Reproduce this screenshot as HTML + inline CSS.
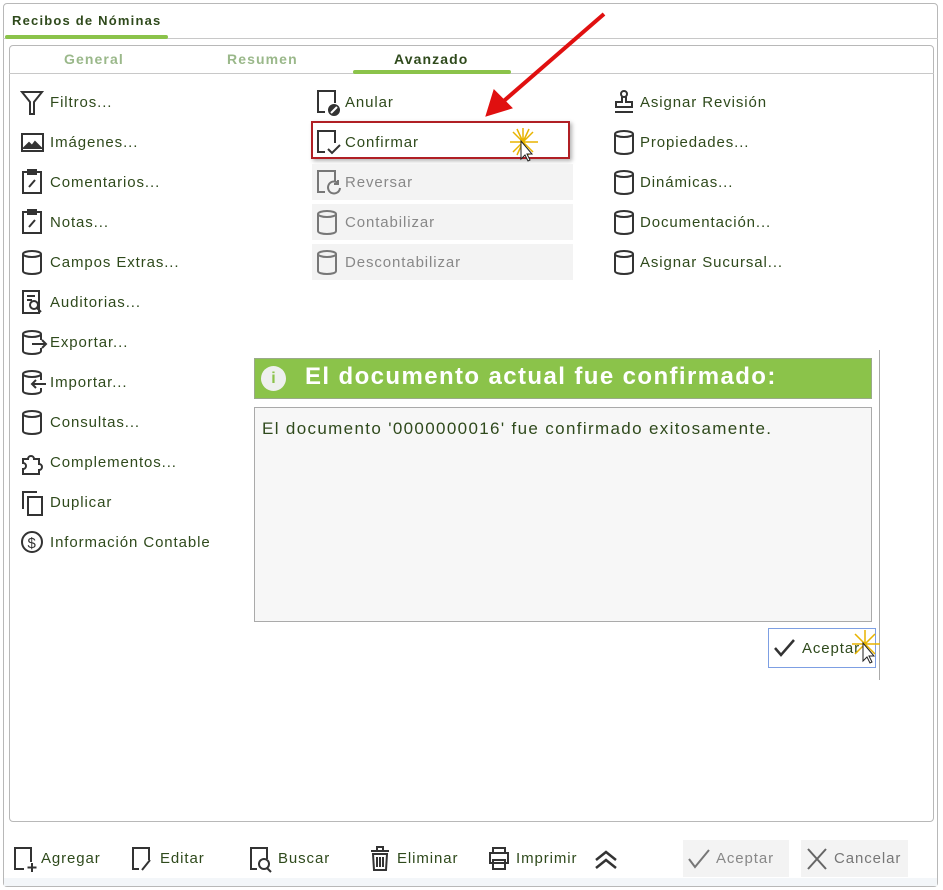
<!DOCTYPE html>
<html><head><meta charset="utf-8"><style>
*{box-sizing:border-box;margin:0;padding:0}
body{width:943px;height:890px;background:#fff;font-family:"Liberation Sans",sans-serif;color:#2f4a1c;position:relative;overflow:hidden}
.a{position:absolute}
.t{font-size:15px;white-space:nowrap;letter-spacing:0.9px}
svg{position:absolute;fill:none;stroke:#333;stroke-width:2}
.gray{color:#888}
.gb{background:#f3f3f3}
</style></head><body>
<div class="a" style="left:3px;top:3px;width:935px;height:884px;border:1px solid #b8b8b8;border-radius:4px;background:#fff"></div>
<div class="a" style="left:3px;top:38px;width:935px;border-top:1px solid #c8c8c8"></div>
<div class="a" style="left:12px;top:13px;font-size:13px;font-weight:bold;color:#2f4a1c;letter-spacing:1.2px">Recibos de Nóminas</div>
<div class="a" style="left:5px;top:35px;width:163px;height:4px;background:#8bc34a;border-radius:2px"></div>
<div class="a" style="left:9px;top:45px;width:925px;height:777px;border:1px solid #b8b8b8;border-radius:4px"></div>
<div class="a" style="left:9px;top:73px;width:925px;border-top:1px solid #c8c8c8"></div>
<div class="a" style="left:64px;top:51px;font-size:14px;letter-spacing:1.1px;font-weight:bold;color:#9ab88a">General</div>
<div class="a" style="left:227px;top:51px;font-size:14px;letter-spacing:1.1px;font-weight:bold;color:#9ab88a">Resumen</div>
<div class="a" style="left:394px;top:51px;font-size:14px;letter-spacing:1.1px;font-weight:bold;color:#2f4a1c">Avanzado</div>
<div class="a" style="left:353px;top:70px;width:158px;height:4px;background:#8bc34a;border-radius:2px"></div>

<!-- col1 -->
<svg style="left:20px;top:90px" width="26" height="26"><path d="M2 2h20l-8 10v12h-4V12z"/></svg><div class="a t" style="left:50px;top:94px">Filtros...</div>
<svg style="left:20px;top:130px" width="26" height="26"><rect x="2" y="4" width="21" height="17"/><path d="M4 18l5-5 3 3 3-4 6 6z" fill="#333"/></svg><div class="a t" style="left:50px;top:134px">Imágenes...</div>
<svg style="left:20px;top:168px" width="26" height="28"><rect x="3" y="4" width="18" height="21"/><path d="M8 2h8v4H8zM9 19l6-7"/></svg><div class="a t" style="left:50px;top:174px">Comentarios...</div>
<svg style="left:20px;top:208px" width="26" height="28"><rect x="3" y="4" width="18" height="21"/><path d="M8 2h8v4H8zM9 19l6-7"/></svg><div class="a t" style="left:50px;top:214px">Notas...</div>
<svg style="left:20px;top:249px" width="26" height="28"><ellipse cx="12" cy="5" rx="9" ry="3"/><path d="M3 5v17c0 4 18 4 18 0V5"/></svg><div class="a t" style="left:50px;top:254px">Campos Extras...</div>
<svg style="left:20px;top:288px" width="26" height="28"><path d="M3 3h16v22H3z"/><circle cx="14" cy="17" r="4"/><path d="M17 20l4 4M7 8h8M7 12h5"/></svg><div class="a t" style="left:50px;top:294px">Auditorias...</div>
<svg style="left:20px;top:329px" width="28" height="28"><ellipse cx="12" cy="5" rx="9" ry="3"/><path d="M3 5v17c0 4 18 4 18 0v-3M21 5v6M12 15h14M22 11l4 4-4 4"/></svg><div class="a t" style="left:50px;top:334px">Exportar...</div>
<svg style="left:20px;top:369px" width="28" height="28"><ellipse cx="12" cy="5" rx="9" ry="3"/><path d="M3 5v17c0 4 18 4 18 0v-3M21 5v6M26 15H12M16 11l-4 4 4 4"/></svg><div class="a t" style="left:50px;top:374px">Importar...</div>
<svg style="left:20px;top:409px" width="26" height="28"><ellipse cx="12" cy="5" rx="9" ry="3"/><path d="M3 5v17c0 4 18 4 18 0V5"/></svg><div class="a t" style="left:50px;top:414px">Consultas...</div>
<svg style="left:20px;top:449px" width="28" height="28"><path d="M3 10h5a3 3 0 1 1 6 0h5v5a3 3 0 1 1 0 6v4H3v-5a3 3 0 1 0 0-6z"/></svg><div class="a t" style="left:50px;top:454px">Complementos...</div>
<svg style="left:20px;top:489px" width="26" height="28"><path d="M3 20V3h14"/><rect x="8" y="8" width="14" height="18"/></svg><div class="a t" style="left:50px;top:494px">Duplicar</div>
<svg style="left:20px;top:529px" width="26" height="28"><circle cx="12" cy="13" r="10"/><text x="7.5" y="19" font-size="15" fill="#333" stroke="none" font-family="Liberation Sans">$</text></svg><div class="a t" style="left:50px;top:534px">Información Contable</div>

<!-- col2 -->
<svg style="left:315px;top:88px" width="28" height="30"><path d="M10 24H3V3h17v12"/><circle cx="19" cy="22" r="5" fill="#333"/><path d="M16 25l6-6" stroke="#fff"/></svg><div class="a t" style="left:345px;top:94px">Anular</div>
<div class="a" style="left:311px;top:121px;width:259px;height:38px;border:2px solid #b01f24;box-shadow:2px 2px 4px rgba(0,0,0,.3)"></div>
<svg style="left:315px;top:128px" width="28" height="30"><path d="M10 24H3V3h17v12"/><path d="M13 21l4 4 8-8"/></svg><div class="a t" style="left:345px;top:134px">Confirmar</div>
<div class="a gb" style="left:312px;top:164px;width:261px;height:36px"></div>
<svg style="left:315px;top:168px;stroke:#777" width="28" height="30"><path d="M10 24H3V3h17v10"/><path d="M25 20a6 6 0 1 1-2-5M23 12v4h-4"/></svg><div class="a t gray" style="left:345px;top:174px">Reversar</div>
<div class="a gb" style="left:312px;top:204px;width:261px;height:36px"></div>
<svg style="left:315px;top:209px;stroke:#777" width="26" height="28"><ellipse cx="12" cy="5" rx="9" ry="3"/><path d="M3 5v17c0 4 18 4 18 0V5"/></svg><div class="a t gray" style="left:345px;top:214px">Contabilizar</div>
<div class="a gb" style="left:312px;top:244px;width:261px;height:36px"></div>
<svg style="left:315px;top:249px;stroke:#777" width="26" height="28"><ellipse cx="12" cy="5" rx="9" ry="3"/><path d="M3 5v17c0 4 18 4 18 0V5"/></svg><div class="a t gray" style="left:345px;top:254px">Descontabilizar</div>

<!-- col3 -->
<svg style="left:612px;top:89px" width="26" height="28"><circle cx="12" cy="5" r="3"/><path d="M10 8v5H4v5h16v-5h-6V8M3 23h18"/></svg><div class="a t" style="left:640px;top:94px">Asignar Revisión</div>
<svg style="left:612px;top:129px" width="26" height="28"><ellipse cx="12" cy="5" rx="9" ry="3"/><path d="M3 5v17c0 4 18 4 18 0V5"/></svg><div class="a t" style="left:640px;top:134px">Propiedades...</div>
<svg style="left:612px;top:169px" width="26" height="28"><ellipse cx="12" cy="5" rx="9" ry="3"/><path d="M3 5v17c0 4 18 4 18 0V5"/></svg><div class="a t" style="left:640px;top:174px">Dinámicas...</div>
<svg style="left:612px;top:209px" width="26" height="28"><ellipse cx="12" cy="5" rx="9" ry="3"/><path d="M3 5v17c0 4 18 4 18 0V5"/></svg><div class="a t" style="left:640px;top:214px">Documentación...</div>
<svg style="left:612px;top:249px" width="26" height="28"><ellipse cx="12" cy="5" rx="9" ry="3"/><path d="M3 5v17c0 4 18 4 18 0V5"/></svg><div class="a t" style="left:640px;top:254px">Asignar Sucursal...</div>

<!-- arrow -->
<svg style="left:480px;top:10px;stroke:#e01010;stroke-width:4" width="130" height="110"><path d="M124 4L18 96"/><path d="M6 106l8-26 18 18z" fill="#e01010" stroke-width="1"/></svg>
<svg style="left:508px;top:126px;stroke:#e8b400;stroke-width:1.5" width="36" height="40"><path d="M15 2v28M2 16h28M5 6l20 20M25 6L5 26M9 3l12 26M21 3L9 29"/><path d="M13 15v18l4-4 3 6 2-1-3-6h5z" fill="#fff" stroke="#222" stroke-width="1"/></svg>

<!-- dialog -->
<div class="a" style="left:879px;top:350px;height:330px;border-left:1px solid #aaa"></div>
<div class="a" style="left:254px;top:358px;width:618px;height:41px;background:#8bc34a;border:1px solid #9aaa8a"></div>
<div class="a" style="left:261px;top:366px;width:25px;height:25px;border-radius:50%;background:#eef0ee;color:#8bc34a;font-size:16px;font-weight:bold;text-align:center;line-height:25px">i</div>
<div class="a" style="left:305px;top:363px;font-size:24px;letter-spacing:1.4px;font-weight:bold;color:#fff;white-space:nowrap">El documento actual fue confirmado:</div>
<div class="a" style="left:254px;top:407px;width:618px;height:215px;background:#f7f7f7;border:1px solid #aaa"></div>
<div class="a t" style="left:262px;top:419px;font-size:17px;letter-spacing:1.35px">El documento '0000000016' fue confirmado exitosamente.</div>
<div class="a" style="left:768px;top:628px;width:108px;height:40px;border:1px solid #7d9fe3;background:#fff"></div>
<svg style="left:772px;top:636px;stroke-width:2.5" width="26" height="24"><path d="M3 12l6 7L22 4"/></svg>
<div class="a t" style="left:802px;top:640px">Aceptar</div>
<svg style="left:850px;top:628px;stroke:#e8b400;stroke-width:1.5" width="40" height="42"><path d="M15 2v28M2 16h28M5 6l20 20M25 6L5 26"/><path d="M13 15v18l4-4 3 6 2-1-3-6h5z" fill="#fff" stroke="#222" stroke-width="1"/></svg>

<!-- bottom toolbar -->
<div class="a" style="left:4px;top:878px;width:933px;height:8px;background:#f3f6f9"></div>
<svg style="left:12px;top:845px" width="26" height="30"><path d="M12 24H3V3h16v14M20 18v9M15.5 22.5h9"/></svg><div class="a t" style="left:41px;top:850px">Agregar</div>
<svg style="left:130px;top:845px" width="26" height="30"><path d="M9 24H3V3h16v12M12 25l8-10"/></svg><div class="a t" style="left:160px;top:850px">Editar</div>
<svg style="left:248px;top:845px" width="28" height="30"><path d="M9 24H3V3h16v11"/><circle cx="16" cy="19" r="5"/><path d="M19 23l4 4"/></svg><div class="a t" style="left:278px;top:850px">Buscar</div>
<svg style="left:368px;top:845px" width="24" height="28"><path d="M3 6h18M9 6V2h6v4M5 9h14l-1 16H6zM9 12v10M12 12v10M15 12v10"/></svg><div class="a t" style="left:397px;top:850px">Eliminar</div>
<svg style="left:486px;top:845px" width="26" height="28"><path d="M7 8V3h12v5M4 8h18v10H4zM7 15h12v9H7z"/></svg><div class="a t" style="left:516px;top:850px">Imprimir</div>
<svg style="left:593px;top:848px;stroke-width:2.5" width="26" height="24"><path d="M3 12l10-8 10 8M3 20l10-8 10 8"/></svg>
<div class="a gb" style="left:683px;top:840px;width:106px;height:37px"></div>
<svg style="left:687px;top:847px;stroke:#777" width="24" height="24"><path d="M2 12l6 8L22 3"/></svg><div class="a t gray" style="left:716px;top:850px">Aceptar</div>
<div class="a gb" style="left:801px;top:840px;width:107px;height:37px"></div>
<svg style="left:805px;top:846px;stroke:#666" width="24" height="26"><path d="M3 3l18 20M21 3L3 23"/></svg><div class="a t gray" style="left:834px;top:850px;color:#777">Cancelar</div>
</body></html>
